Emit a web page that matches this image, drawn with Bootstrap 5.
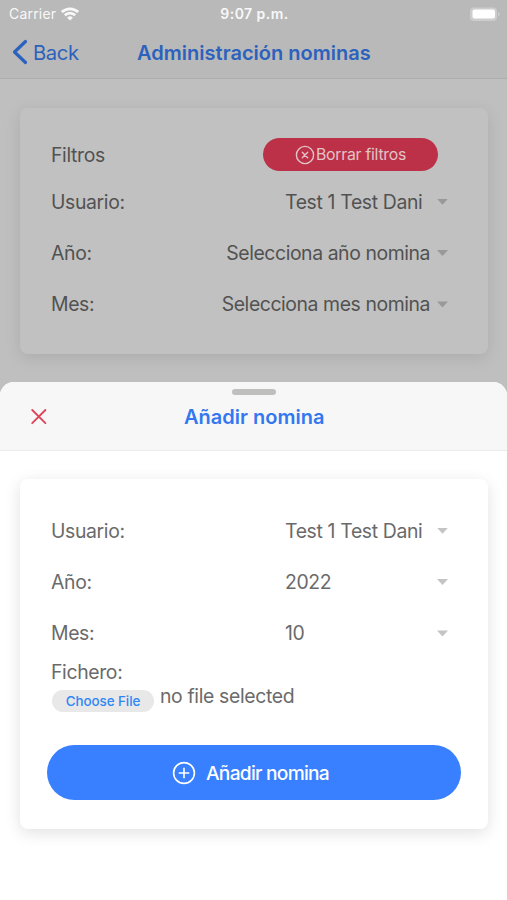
<!DOCTYPE html>
<html lang="es">
<head>
<meta charset="utf-8">
<meta name="viewport" content="width=device-width, initial-scale=1">
<title>Administración nominas</title>
<link href="https://cdn.jsdelivr.net/npm/bootstrap@5.3.0/dist/css/bootstrap.min.css" rel="stylesheet">
<style>
body{font-family:Inter,"Liberation Sans",sans-serif;font-size:19.4px;line-height:24px;letter-spacing:-.35px;color:#6a6a6a;background:#fff;height:900px;overflow:hidden}
.backdrop-page{height:396px;background:#bfbfbf;color:#525252}
.top-head{height:79px;background:#b9b9b9;border-bottom:1px solid #adadad}
.statusbar{height:27px;display:grid;grid-template-columns:1fr auto 1fr;align-items:center;color:#f8f8f8;font-size:14px;line-height:16px;letter-spacing:.2px;padding:1px 7px 0 9px}
.clock{letter-spacing:.45px}
.wifi{margin-left:5px}
.titlebar{height:50px;display:grid;grid-template-columns:137px 234px 1fr;align-items:center;color:#2c62bd}
.back-label{font-size:20.2px;margin-left:1px;padding-top:1px}
.heading{font-weight:600;font-size:20px;letter-spacing:.02px;white-space:nowrap;padding-top:1px}
.panel{margin-left:20px;margin-right:19px;border-radius:8px;padding:0 31px}
.panel-filters{margin-top:29px;padding-top:30px;height:246px;background:#c1c1c1;box-shadow:0 4px 16px rgba(0,0,0,.1)}
.panel-form{margin-top:28px;padding-top:26px;height:350px;background:#fff;box-shadow:0 4px 16px rgba(0,0,0,.12)}
.fields{margin-top:5px}
.field{height:51.4px;padding-right:9px}
.caret{width:11px;height:6px;background:#c4c4c4;clip-path:polygon(0 0,100% 0,50% 100%)}
.backdrop-page .caret{background:#999}
.value{width:148px}
.value-wide{letter-spacing:-.42px;margin-right:-1px}
.btn-clear{width:175px;height:33px;background:#bc3147;color:#e2c3c8;font-size:15.8px;margin-right:19px;letter-spacing:-.25px}
.btn-clear svg{margin-right:1px}
.sheet{margin-top:-14px;background:#fff;border-radius:14px 14px 0 0;overflow:hidden;height:518px}
.sheet-head{height:69px;padding-top:7px;background:#f7f7f7;border-bottom:1px solid #ebebeb}
.grabber{width:44px;height:6px;border-radius:3px;background:#bfbfbe}
.sheet-bar{display:grid;grid-template-columns:184px 1fr;color:#3478f0;padding-top:9px}
.close-icon{margin-left:30px}
.file-row{padding-top:1px}
.file-row + div span{margin-left:-1px}
.btn-file{width:102px;height:22px;background:#e8e8e8;color:#2f86f6;font-size:13.4px;font-weight:500;line-height:22px;margin:6px 7px 0 1px;letter-spacing:-.05px}
.btn-add{height:55px;background:#3880ff;color:#fff;font-size:19.2px;font-weight:500;letter-spacing:-.75px;margin:33px -4px 0;padding-right:7px!important}
.btn-add svg{margin-right:10px}
.btn-add span{padding-top:1px}
</style>
</head>
<body>
<div class="backdrop-page">
  <header class="top-head">
    <div class="statusbar">
      <div class="d-flex align-items-center"><span>Carrier</span>
        <svg class="wifi" width="18" height="14" viewBox="0 0 18 14" fill="none" stroke="#f8f8f8" stroke-width="2.7"><path d="M.9 5.1a11.6 11.6 0 0 1 16.2 0M3.8 8.2a7.4 7.4 0 0 1 10.4 0"/><path d="M9 13.6 6.1 10.7a4.1 4.1 0 0 1 5.8 0Z" fill="#f8f8f8" stroke="none"/></svg>
      </div>
      <div class="clock fw-semibold">9:07 p.m.</div>
      <svg class="ms-auto" width="30" height="15" viewBox="0 0 30 15"><rect x="0" y=".5" width="27" height="13.5" rx="4" fill="#cdcdcd"/><path d="M28 5v4.5q1.8-.6 1.8-2.2T28 5" fill="#cdcdcd"/><rect x="2.5" y="2.5" width="22.5" height="9" rx="2" fill="#fff"/></svg>
    </div>
    <div class="titlebar">
      <div class="d-flex align-items-center ps-2"><svg width="24" height="28" viewBox="0 0 24 28" fill="none" stroke="#2c62bd" stroke-width="3.2" stroke-linecap="round" stroke-linejoin="round"><path d="M17.5 3.5 6.5 14l11 10.5"/></svg><span class="back-label">Back</span></div>
      <h1 class="heading m-0">Administración nominas</h1>
    </div>
  </header>
  <section class="panel panel-filters">
    <div class="d-flex align-items-center justify-content-between"><span>Filtros</span>
      <button class="btn btn-clear rounded-pill border-0 p-0 d-flex align-items-center justify-content-center"><svg width="20" height="20" viewBox="0 0 20 20" fill="none" stroke="#e2c3c8" stroke-width="1.4" stroke-linecap="round"><circle cx="10" cy="10" r="8.6"/><path d="m7.3 7.3 5.4 5.4M12.7 7.3l-5.4 5.4"/></svg><span>Borrar filtros</span></button>
    </div>
    <div class="fields">
      <div class="field d-flex align-items-center"><span class="me-auto">Usuario:</span><span class="value">Test 1 Test Dani</span><span class="caret ms-1"></span></div>
      <div class="field d-flex align-items-center"><span class="me-auto">Año:</span><span class="value-wide">Selecciona año nomina</span><span class="caret ms-2"></span></div>
      <div class="field d-flex align-items-center"><span class="me-auto">Mes:</span><span class="value-wide">Selecciona mes nomina</span><span class="caret ms-2"></span></div>
    </div>
  </section>
</div>
<main class="sheet position-relative">
  <header class="sheet-head">
    <div class="grabber mx-auto"></div>
    <div class="sheet-bar align-items-center">
      <svg class="close-icon" width="18" height="18" viewBox="0 0 18 18" fill="none" stroke="#e04359" stroke-width="1.8" stroke-linecap="round"><path d="m2.2 2 13.2 13.2M15.4 2 2.2 15.2"/></svg>
      <h2 class="heading m-0">Añadir nomina</h2>
    </div>
  </header>
  <section class="panel panel-form">
    <div class="field d-flex align-items-center"><span class="me-auto">Usuario:</span><span class="value">Test 1 Test Dani</span><span class="caret ms-1"></span></div>
    <div class="field d-flex align-items-center"><span class="me-auto">Año:</span><span class="value">2022</span><span class="caret ms-1"></span></div>
    <div class="field d-flex align-items-center"><span class="me-auto">Mes:</span><span class="value">10</span><span class="caret ms-1"></span></div>
    <div class="file-row">Fichero:</div>
    <div class="d-flex align-items-start"><button class="btn btn-file rounded-pill border-0 p-0">Choose File</button><span>no file selected</span></div>
    <div class="d-flex"><button class="btn btn-add rounded-pill border-0 p-0 flex-grow-1 d-flex align-items-center justify-content-center"><svg width="24" height="24" viewBox="0 0 24 24" fill="none" stroke="#fff" stroke-width="1.6" stroke-linecap="round"><circle cx="12" cy="12" r="10.4"/><path d="M12 7.3v9.4M7.3 12h9.4"/></svg><span>Añadir nomina</span></button></div>
  </section>
</main>
<script src="https://cdn.jsdelivr.net/npm/bootstrap@5.3.0/dist/js/bootstrap.bundle.min.js"></script>
</body>
</html>
